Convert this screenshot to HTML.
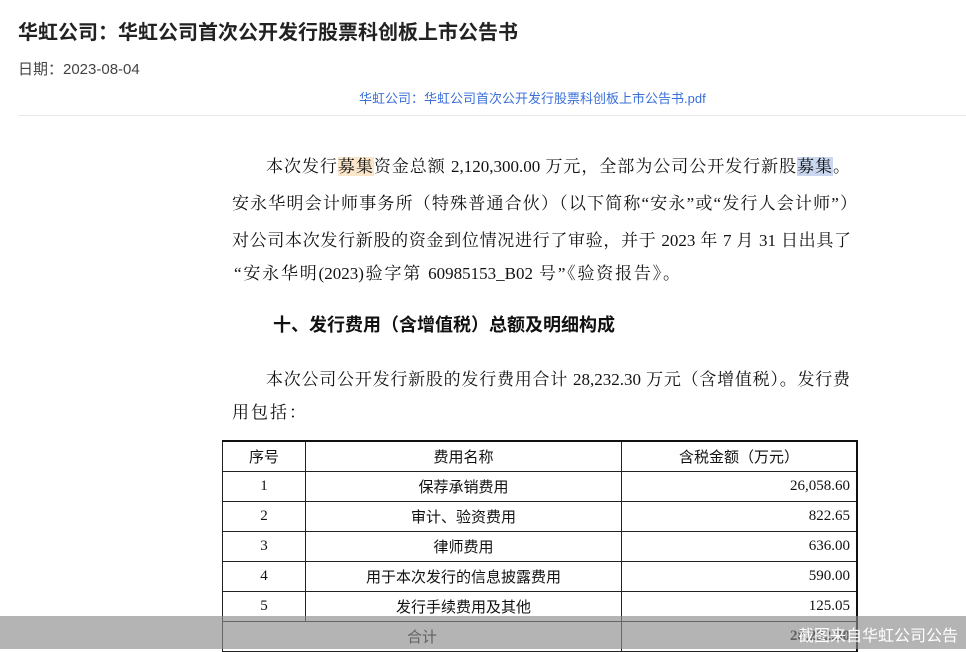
<!DOCTYPE html>
<html><head><meta charset="utf-8"><style>
body{margin:0;width:966px;height:649px;overflow:hidden;background:#fff;position:relative;font-family:"Liberation Sans","Noto Sans CJK SC",sans-serif}
.a{position:absolute;white-space:nowrap}
.s{font-family:"Liberation Serif","Noto Serif CJK SC",serif;color:#111;font-size:17px;text-align:justify;text-align-last:justify;white-space:normal}
table{position:absolute;left:222px;top:440px;border-collapse:collapse;font-family:"Liberation Serif","Noto Sans CJK SC",serif;font-size:15px;color:#111}
td{border:1px solid #222;height:29px;padding:0 6px;text-align:center;vertical-align:middle}
td.r{text-align:right}
</style></head><body>
<div class="a" style="left:18px;top:16px;font-size:20px;font-weight:bold;color:#222">华虹公司：华虹公司首次公开发行股票科创板上市公告书</div>
<div class="a" style="left:18px;top:58px;font-size:15px;color:#444">日期：2023-08-04</div>
<div class="a" style="left:359px;top:88px;font-size:13px;color:#3a6fd8">华虹公司：华虹公司首次公开发行股票科创板上市公告书.pdf</div>
<div class="a" style="left:18px;top:115px;width:948px;height:1px;background:#e8e8ee"></div>
<div class="a s" style="left:266px;top:152px;width:584px">本次发行<span style="background:#fbe6cc">募集</span>资金总额 2,120,300.00 万元，全部为公司公开发行新股<span style="background:#c9d8f0">募集</span>。</div>
<div class="a s" style="left:232px;top:189px;width:625px">安永华明会计师事务所（特殊普通合伙）（以下简称“安永”或“发行人会计师”）</div>
<div class="a s" style="left:232px;top:226px;width:619px">对公司本次发行新股的资金到位情况进行了审验，并于 2023 年 7 月 31 日出具了</div>
<div class="a s" style="left:234px;top:259px;width:446px">“安永华明(2023)验字第 60985153_B02 号”《验资报告》。</div>
<div class="a" style="left:273px;top:311px;font-size:18px;font-weight:bold;color:#111">十、发行费用（含增值税）总额及明细构成</div>
<div class="a s" style="left:266px;top:365px;width:584px">本次公司公开发行新股的发行费用合计 28,232.30 万元（含增值税）。发行费</div>
<div class="a" style="left:232px;top:398px;font-family:'Liberation Serif','Noto Serif CJK SC',serif;font-size:17px;color:#111;letter-spacing:2px">用包括：</div>
<table>
<tr><td style="width:70px;border-top:2px solid #111">序号</td><td style="width:303px;border-top:2px solid #111">费用名称</td><td style="width:222px;border-top:2px solid #111;border-right:2px solid #111">含税金额（万元）</td></tr>
<tr><td>1</td><td>保荐承销费用</td><td class="r" style="border-right:2px solid #111">26,058.60</td></tr>
<tr><td>2</td><td>审计、验资费用</td><td class="r" style="border-right:2px solid #111">822.65</td></tr>
<tr><td>3</td><td>律师费用</td><td class="r" style="border-right:2px solid #111">636.00</td></tr>
<tr><td>4</td><td>用于本次发行的信息披露费用</td><td class="r" style="border-right:2px solid #111">590.00</td></tr>
<tr><td>5</td><td>发行手续费用及其他</td><td class="r" style="border-right:2px solid #111">125.05</td></tr>
<tr><td colspan="2">合计</td><td class="r" style="font-weight:bold;border-right:2px solid #111">28,232.30</td></tr>
</table>
<div class="a" style="left:0;top:616px;width:966px;height:33px;background:rgba(140,140,140,0.65)"></div>
<div class="a" style="left:798px;top:622px;font-size:16px;color:#fff">截图来自华虹公司公告</div>
</body></html>
